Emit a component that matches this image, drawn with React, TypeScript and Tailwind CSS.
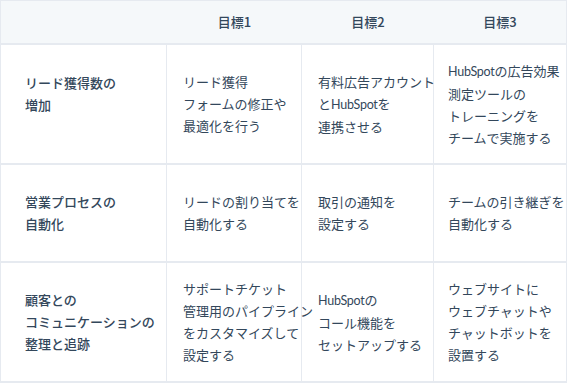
const rows = [
  {
    label: ['リード獲得数の', '増加'],
    labelPad: true,
    goals: [
      ['リード獲得', 'フォームの修正や', '最適化を行う'],
      ['有料広告アカウント', 'とHubSpotを', '連携させる'],
      ['HubSpotの広告効果', '測定ツールの', 'トレーニングを', 'チームで実施する'],
    ],
    h: 'h-[120px]',
  },
  {
    label: ['営業プロセスの', '自動化'],
    labelPad: false,
    goals: [
      ['リードの割り当てを', '自動化する'],
      ['取引の通知を', '設定する'],
      ['チームの引き継ぎを', '自動化する'],
    ],
    h: 'h-[98px]',
  },
  {
    label: ['顧客との', 'コミュニケーションの', '整理と追跡'],
    labelPad: false,
    goals: [
      ['サポートチケット', '管理用のパイプライン', 'をカスタマイズして', '設定する'],
      ['HubSpotの', 'コール機能を', 'セットアップする'],
      ['ウェブサイトに', 'ウェブチャットや', 'チャットボットを', '設置する'],
    ],
    h: 'h-[120px]',
  },
];

// latin brand name is set a bit narrower than the CJK text around it
const Line = ({ text }: { text: string }) => {
  const parts = text.split('HubSpot');
  if (parts.length === 1) return <div className="whitespace-nowrap">{text}</div>;
  return (
    <div className="whitespace-nowrap">
      {parts[0]}
      <span className="text-[12.5px] tracking-[-0.02em]" style={{ fontFamily: 'Lato, sans-serif' }}>
        HubSpot
      </span>
      {parts[1]}
    </div>
  );
};

const Lines = ({ lines }: { lines: string[] }) => (
  <>
    {lines.map((l, i) => (
      <Line key={i} text={l} />
    ))}
  </>
);

export default function App() {
  return (
    <div
      className="w-[567px] h-[383px] bg-white text-[#33475b] text-[13px] leading-[22px] overflow-hidden"
      style={{ fontFamily: '"Noto Sans CJK JP", "Noto Sans", sans-serif' }}
    >
      <div className="border-l border-r border-[#e6eaf0] h-full">
        {/* header */}
        <div className="grid grid-cols-[166px_135px_132px_1fr] h-[45px] bg-[#f5f8fa] border-t border-b-2 border-[#e6eaf0] font-medium">
          <div />
          <div className="flex items-center justify-center">目標1</div>
          <div className="flex items-center justify-center">目標2</div>
          <div className="flex items-center justify-center">目標3</div>
        </div>

        {rows.map((row, i) => (
          <div key={i} className={`grid grid-cols-[166px_135px_132px_1fr] ${row.h} border-b-2 border-[#e6eaf0]`}>
            <div className="flex items-center pl-6 border-r border-[#e6eaf0] font-medium">
              <div className={row.labelPad ? 'pb-5' : ''}>
                <Lines lines={row.label} />
              </div>
            </div>
            <div className="flex items-center pl-4 border-r border-[#e6eaf0]">
              <div>
                <Lines lines={row.goals[0]} />
              </div>
            </div>
            <div className="flex items-center pl-4 border-r border-[#e6eaf0]">
              <div>
                <Lines lines={row.goals[1]} />
              </div>
            </div>
            <div className="flex items-center pl-[14px]">
              <div>
                <Lines lines={row.goals[2]} />
              </div>
            </div>
          </div>
        ))}
      </div>
    </div>
  );
}
